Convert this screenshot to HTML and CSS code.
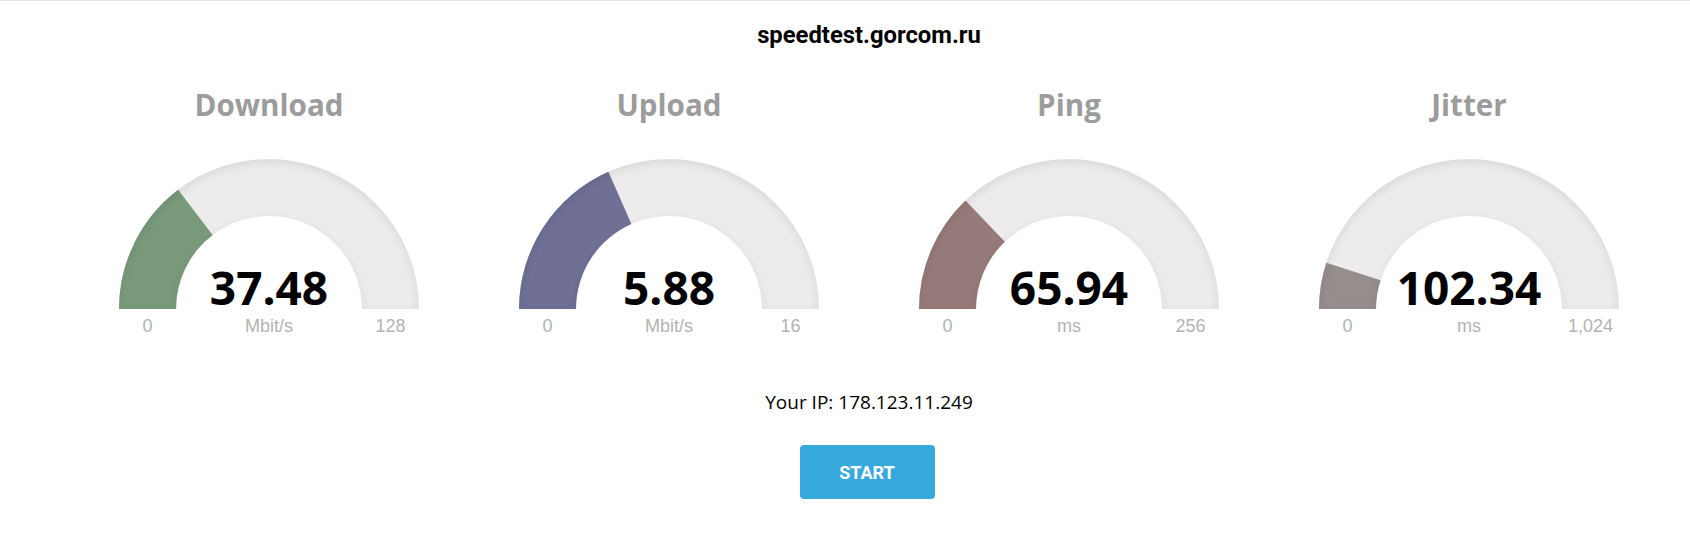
FILE: index.html
```html
<!DOCTYPE html>
<html lang="en">
<head>
<meta charset="utf-8">
<title>speedtest.gorcom.ru</title>
<link rel="stylesheet" href="styles.css">
</head>
<body>
<svg class="defs" width="0" height="0" aria-hidden="true">
  <defs>
    <filter id="inset" x="-10%" y="-10%" width="120%" height="120%">
      <feOffset in="SourceAlpha" dx="0" dy="3"/>
      <feGaussianBlur stdDeviation="5" result="offblur"/>
      <feComposite operator="out" in="SourceGraphic" in2="offblur" result="inverse"/>
      <feFlood flood-color="#000" flood-opacity="0.2" result="color"/>
      <feComposite operator="in" in="color" in2="inverse" result="shadow"/>
      <feComposite operator="over" in="shadow" in2="SourceGraphic"/>
    </filter>
  </defs>
</svg>
<div class="page">
  <h1 class="site">speedtest.gorcom.ru</h1>
  <div class="meters">
    <div class="meter">
      <div class="name">Download</div>
      <div class="gauge">
        <svg width="300" height="150" viewBox="0 0 300 150">
          <g filter="url(#inset)">
            <path class="bg" d="M0,150 A150,150 0 0 1 300,150 L243,150 A93,93 0 0 0 57,150 Z"/>
            <path class="fill-dl" d="M0,150 A150,150 0 0 1 59.10,30.67 L93.64,76.02 A93,93 0 0 0 57,150 Z"/>
          </g>
        </svg>
        <div class="value">37.48</div>
      </div>
      <div class="labels"><span>0</span><span>Mbit/s</span><span>128</span></div>
    </div>
    <div class="meter">
      <div class="name">Upload</div>
      <div class="gauge">
        <svg width="300" height="150" viewBox="0 0 300 150">
          <g filter="url(#inset)">
            <path class="bg" d="M0,150 A150,150 0 0 1 300,150 L243,150 A93,93 0 0 0 57,150 Z"/>
            <path class="fill-ul" d="M0,150 A150,150 0 0 1 89.35,12.81 L112.40,64.94 A93,93 0 0 0 57,150 Z"/>
          </g>
        </svg>
        <div class="value">5.88</div>
      </div>
      <div class="labels"><span>0</span><span>Mbit/s</span><span>16</span></div>
    </div>
    <div class="meter">
      <div class="name">Ping</div>
      <div class="gauge">
        <svg width="300" height="150" viewBox="0 0 300 150">
          <g filter="url(#inset)">
            <path class="bg" d="M0,150 A150,150 0 0 1 300,150 L243,150 A93,93 0 0 0 57,150 Z"/>
            <path class="fill-ping" d="M0,150 A150,150 0 0 1 46.49,41.44 L85.82,82.70 A93,93 0 0 0 57,150 Z"/>
          </g>
        </svg>
        <div class="value">65.94</div>
      </div>
      <div class="labels"><span>0</span><span>ms</span><span>256</span></div>
    </div>
    <div class="meter">
      <div class="name">Jitter</div>
      <div class="gauge">
        <svg width="300" height="150" viewBox="0 0 300 150">
          <g filter="url(#inset)">
            <path class="bg" d="M0,150 A150,150 0 0 1 300,150 L243,150 A93,93 0 0 0 57,150 Z"/>
            <path class="fill-jit" d="M0,150 A150,150 0 0 1 7.32,103.68 L61.54,121.28 A93,93 0 0 0 57,150 Z"/>
          </g>
        </svg>
        <div class="value">102.34</div>
      </div>
      <div class="labels"><span>0</span><span>ms</span><span>1,024</span></div>
    </div>
  </div>
  <div class="ip">Your IP: 178.123.11.249</div>
  <button class="start" type="button">START</button>
</div>
</body>
</html>
```
FILE: styles.css
```css
html, body {
  margin: 0;
  padding: 0;
  background: #fff;
}
body {
  border-top: 1px solid #e2e2e2;
  font-family: "Open Sans", "Liberation Sans", sans-serif;
}
.defs {
  position: absolute;
  width: 0;
  height: 0;
}
.page {
  padding-left: 48px;
  display: flex;
  flex-direction: column;
  align-items: center;
}
.site {
  margin: 19px 0 0;
  font-family: Roboto, "Liberation Sans", sans-serif;
  font-weight: 700;
  font-size: 23.8px;
  line-height: 31px;
  color: #000;
}
.meters {
  display: flex;
  justify-content: center;
  margin-top: 34px;
}
.meter {
  width: 400px;
  display: flex;
  flex-direction: column;
  align-items: center;
}
.name {
  font-family: "Open Sans", sans-serif;
  font-weight: 700;
  font-size: 29.6px;
  line-height: 40px;
  color: #9c9c9c;
}
.gauge {
  position: relative;
  width: 300px;
  height: 150px;
  margin-top: 34px;
}
.gauge svg {
  display: block;
}
.bg { fill: #edebeb; }
.fill-dl { fill: #789a7a; }
.fill-ul { fill: #6f7096; }
.fill-ping { fill: #977a7a; }
.fill-jit { fill: #968d8d; }
.value {
  position: absolute;
  left: 0;
  right: 0;
  bottom: -1px;
  text-align: center;
  font-family: "Open Sans", sans-serif;
  font-weight: 700;
  font-size: 46px;
  line-height: 46px;
  color: #000;
}
.labels {
  display: grid;
  grid-template-columns: 57px 186px 57px;
  margin-top: 7px;
  font-family: "Liberation Sans", Arial, sans-serif;
  font-size: 18px;
  line-height: 21px;
  color: #b3b3b3;
  text-align: center;
  white-space: nowrap;
}
.labels span {
  display: flex;
  justify-content: center;
}
.ip {
  margin-top: 52px;
  font-family: "Open Sans", sans-serif;
  font-size: 19px;
  line-height: 26px;
  color: #000;
}
.start {
  margin-top: 30px;
  margin-right: 4px;
  width: 135px;
  height: 54px;
  border: none;
  border-radius: 4px;
  background: #37a9dc;
  color: #fff;
  font-family: Roboto, "Liberation Sans", sans-serif;
  font-weight: 700;
  font-size: 18px;
  padding: 0;
  cursor: pointer;
}
```
